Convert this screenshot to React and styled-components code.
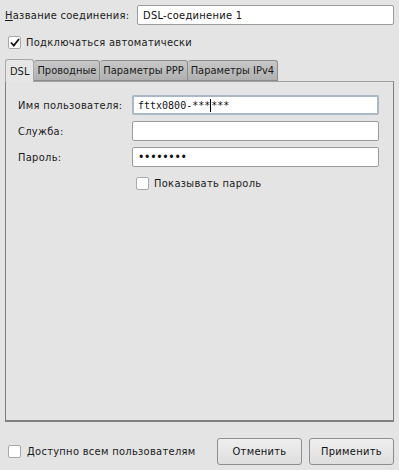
import React from "react";
import styled, { createGlobalStyle } from "styled-components";

const FONT = `"DejaVu Sans Condensed", "DejaVu Sans", "Liberation Sans", sans-serif`;

const Global = createGlobalStyle`
  html, body { margin: 0; padding: 0; background: #e4e4e4; }
  body { font-family: ${FONT}; font-size: 11px; color: #1a1a1a; }
  * { box-sizing: border-box; }
`;

const Window = styled.div`
  width: 399px;
  height: 470px;
  background: #e4e4e4;
  padding: 5px 5px 0 5px;
  display: flex;
  flex-direction: column;
`;

const Row = styled.div`
  display: flex;
  align-items: center;
  height: 20px;
`;

const Label = styled.label`
  width: ${(p) => p.$w}px;
  flex: none;
  white-space: nowrap;
  letter-spacing: 0.3px;
`;

const Mnemonic = styled.span`
  text-decoration: underline;
`;

const TextInput = styled.input`
  width: ${(p) => p.$w}px;
  height: 20px;
  border: 1px solid #9c9c9c;
  border-radius: 2px;
  background: #fff;
  padding: 0 5px;
  font-family: ${FONT};
  font-size: ${(p) => (p.$pw ? 12 : 11)}px;
  letter-spacing: ${(p) => (p.$pw ? "-0.3px" : "0.3px")};
  color: #111;
  outline: none;
`;

const FakeInput = styled.div`
  width: ${(p) => p.$w}px;
  height: 20px;
  border: 2px solid #aab7c5;
  border-radius: 2px;
  background: #fff;
  padding: 0 4px;
  display: flex;
  align-items: center;
  font-family: "DejaVu Sans Mono", monospace;
  font-size: 10px;
  color: #111;
  white-space: pre;
`;

const Caret = styled.span`
  display: inline-block;
  width: 1px;
  height: 13px;
  background: #000;
`;

const Box = styled.span`
  width: 13px;
  height: 13px;
  flex: none;
  border: 1px solid #a8a8a8;
  border-radius: 2px;
  background: #fff;
  display: inline-flex;
  align-items: center;
  justify-content: center;
  margin-right: ${(p) => p.$gap || 6}px;
`;

const CheckRow = styled.div`
  display: flex;
  align-items: center;
  height: 14px;
  margin-left: ${(p) => p.$ml || 0}px;
  margin-top: ${(p) => p.$mt || 0}px;
  white-space: nowrap;
  letter-spacing: 0.3px;
`;

const Check = ({ checked, gap }) => (
  <Box $gap={gap}>
    {checked && (
      <svg width="10" height="9" viewBox="0 0 10 9">
        <path d="M1 4.5 L3.8 7.5 L9 1" stroke="#111" strokeWidth="1.8" fill="none" />
      </svg>
    )}
  </Box>
);

const TabBar = styled.div`
  display: flex;
  align-items: flex-end;
  height: 22px;
  margin-top: 10px;
  position: relative;
  z-index: 1;
`;

const Tab = styled.div`
  height: ${(p) => (p.$active ? 23 : 21)}px;
  padding: 0 ${(p) => (p.$active ? 4 : 3)}px;
  display: flex;
  align-items: center;
  border: 1px solid #8c8c8c;
  border-left: ${(p) => (p.$active ? "1px solid #a8a8a8" : "none")};
  border-bottom: ${(p) => (p.$active ? "none" : "1px solid #8c8c8c")};
  border-color: ${(p) => (p.$active ? "#a8a8a8" : "#8c8c8c")};
  border-radius: 3px 3px 0 0;
  background: ${(p) => (p.$active ? "#e6e6e6" : "linear-gradient(#c8c8c8, #b0b0b0)")};
  margin-bottom: ${(p) => (p.$active ? -1 : 0)}px;
  white-space: nowrap;
`;

const Panel = styled.div`
  height: 341px;
  border: 1px solid #a0a0a0;
  border-left-color: #808080;
  border-bottom: 2px solid #808080;
  border-right: 1px solid #808080;
  padding: 13px 14px 0 12px;
  display: flex;
  flex-direction: column;
`;

const FormGrid = styled.div`
  display: grid;
  grid-template-columns: 114px 247px;
  row-gap: 6px;
  align-items: center;
`;

const Footer = styled.div`
  display: flex;
  align-items: center;
  margin-top: 16px;
  height: 27px;
`;

const Spacer = styled.div`
  flex: 1;
`;

const Button = styled.button`
  width: 85px;
  height: 27px;
  margin-left: ${(p) => p.$ml || 0}px;
  border: 1px solid #8e8e8e;
  border-radius: 3px;
  background: linear-gradient(#efefef, #dedede);
  font-family: ${FONT};
  font-size: 11px;
  letter-spacing: 0.3px;
  color: #111;
  padding: 0;
`;

export default function App() {
  return (
    <>
      <Global />
      <Window>
        <Row>
          <Label $w={132}>
            <Mnemonic>Н</Mnemonic>азвание соединения:
          </Label>
          <TextInput $w={257} defaultValue="DSL-соединение 1" />
        </Row>
        <CheckRow $ml={3} $mt={10}>
          <Check checked gap={5} />
          Подключаться автоматически
        </CheckRow>
        <TabBar>
          <Tab $active>DSL</Tab>
          <Tab>Проводные</Tab>
          <Tab>Параметры PPP</Tab>
          <Tab>Параметры IPv4</Tab>
        </TabBar>
        <Panel>
          <FormGrid>
            <Label $w={114}>Имя пользователя:</Label>
            <FakeInput $w={247}>
              fttx0800-***<Caret />***
            </FakeInput>
            <Label $w={114}>Служба:</Label>
            <TextInput $w={247} defaultValue="" />
            <Label $w={114}>Пароль:</Label>
            <TextInput $w={247} type="password" $pw defaultValue="12345678" />
          </FormGrid>
          <CheckRow $ml={118} $mt={9}>
            <Check gap={5} />
            Показывать пароль
          </CheckRow>
        </Panel>
        <Footer>
          <CheckRow $ml={3}>
            <Check gap={6} />
            Доступно всем пользователям
          </CheckRow>
          <Spacer />
          <Button>Отменить</Button>
          <Button $ml={7}>Применить</Button>
        </Footer>
      </Window>
    </>
  );
}
